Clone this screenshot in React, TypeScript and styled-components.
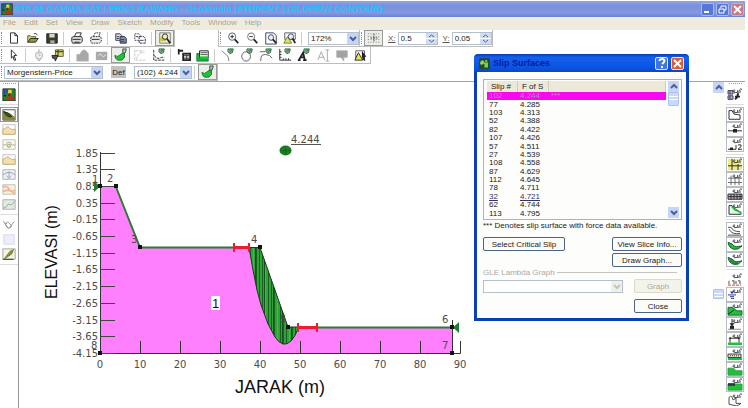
import React from "react";
import styled, { createGlobalStyle, css } from "styled-components";

const Global = createGlobalStyle`
  * { box-sizing: border-box; }
  body { margin: 0; background: #fff; }
  body, button, input, select { font-family: "Liberation Sans", Arial, sans-serif; font-size: 8px; color: #222; }
  button, input, select { margin: 0; padding: 0; border-radius: 0; }
  svg { display: block; }
`;

/* ---------- icons ---------- */

const K = "#222";
const G = "#1fc03a";
const geo = (
  <path d="M8 2.500q-1.500-1-2 .8t1.500.8l.5-1M10 3q1-1 1 .4t-1 .8M12 2.200q1.500 0 .8 1.600M13 1l2 .5M7 5.500l7-1" stroke="#3a4148" fill="none" />
);
const pen = <path d="M8 1l6 0l-1 4l-3 1l-2-2z M9 4l3-3M10 5l3-3" stroke="#245c34" fill="#9fd0a8" />;
const slope = <path d="M1 8q3 2 5 0l6-4v6l-3 3H4q-3-2-3-5z" fill={G} stroke="#0c7a22" />;

const icons: Record<string, React.ReactNode> = {
  new: <path d="M4 2h5l3 3v8H4zM9 2v3h3" stroke={K} fill="#fff" />,
  open: (<><path d="M2 12V5h3l1 1h5v2" stroke="#555" fill="#d8d278" /><path d="M2 12l3-4h9l-3 4z" fill="#9c9a2a" stroke={K} /><path d="M9 3q2-1 4 1" stroke={K} fill="none" /></>),
  save: (<><path d="M2 3h12v10H2z" fill="#3b3b2c" stroke={K} /><path d="M5 3h6v4H5z" fill="#d8d8c8" /><path d="M6 10h5v3H6z" fill="#aaa" /></>),
  print: (<><path d="M5 6l2-4h6l-2 4" fill="#fff" stroke={K} /><path d="M2 7l2-1h9l1 2v3l-2 2H3l-1-2z" fill="#ddd" stroke={K} /><path d="M3 9h9M5 12h6" stroke={K} /></>),
  print2: (<><path d="M5 6l2-4h6l-2 4" fill="#fff" stroke={K} strokeDasharray="2 1" /><path d="M2 7l2-1h9l1 2v3l-2 2H3l-1-2z" fill="#eee" stroke={K} strokeDasharray="2 1" /><path d="M3 9h9" stroke={K} /></>),
  copy: (<><path d="M2 3h5l2 2v5H2z" fill="#dde" stroke="#334" /><path d="M7 6h5l2 2v5H7z" fill="#8a93b8" stroke="#223" /><path d="M8 9h4M8 11h4M3 6h3M3 8h3" stroke="#334" /></>),
  copy2: (<><path d="M2 3h5l2 2v5H2z" fill="#fff" stroke="#445" strokeDasharray="2 1" /><path d="M7 6h5l2 2v5H7z" fill="#fff" stroke="#223" strokeDasharray="3 1" /><path d="M3 6h3M8 10h4" stroke="#334" /></>),
  find: (<><path d="M2 2h12v11H2z" fill="#f2f2d8" stroke="#777" /><path d="M2 8l4-4 3 3v4H3z" fill="#c9c437" /><circle cx="8" cy="6" r="3" fill="#e8eecb" stroke={K} /><path d="M10 8l4 5" stroke={K} strokeWidth="2" /></>),
  zoomin: (<><circle cx="7" cy="6" r="4" fill="#fff" stroke="#456" /><path d="M5 6h4M7 4v4" stroke={K} /><path d="M10 9l4 4" stroke={K} strokeWidth="2" /></>),
  zoomout: (<><circle cx="7" cy="6" r="4" fill="#fff" stroke="#667" /><path d="M5 6h4" stroke={K} /><path d="M10 9l4 4" stroke={K} strokeWidth="2" /></>),
  zoompage: (<><path d="M2 2h9l3 3v9H2z" fill="#fff" stroke="#335" /><circle cx="8" cy="7" r="3" fill="#eef" stroke="#345" /><path d="M10 9l4 4" stroke={K} strokeWidth="2" /></>),
  zoomobj: (<><path d="M2 2h12v7H2z" fill="#fff" stroke="#556" /><path d="M1 13l4-7 5 7z" fill="#e4e35a" stroke="#773" /><circle cx="9" cy="6" r="3" fill="#eef" stroke="#345" /><path d="M11 8l3 5" stroke={K} strokeWidth="2" /></>),
  grid: (<><path d="M1 3h14M1 6h14M1 9h14M1 12h14" stroke="#666" strokeDasharray="1 2" /><path d="M8 3v9M4 7.500h8" stroke="#444" strokeDasharray="2 1" /></>),
  arrow: <path d="M5 2l6 6H8l2 5-2 0-1-4-2 2z" fill="#fff" stroke={K} />,
  compass: (<><path d="M8 1v3M6 12l2 2 2-2" stroke="#aaa" fill="none" /><circle cx="8" cy="8" r="4" fill="#eee" stroke="#aaa" /><path d="M8 5v3h2" stroke="#bbb" fill="none" /></>),
  key: (<><path d="M5 2h9v7H5z" fill="#dcd85c" stroke="#555" /><path d="M5 4h9M8 2v7" stroke={K} /><path d="M1 8h7l-3 6-1-3H2z" fill="#555" stroke={K} /></>),
  gray1: <path d="M1 7h3l3-4 3-1 4 4v8H1z" fill="#a8a8a8" stroke="#b5b5b5" />,
  gray2: (<><path d="M1 4h13v9H1z" fill="#aaa" /><path d="M4 8q2-3 4 0t4-1" stroke="#eee" fill="none" /></>),
  slope: (<>{slope}<path d="M10 1h4l-1 4-3 1z" stroke="#254" fill="#b6c79a" /></>),
  curveoff: <path d="M2 2v11h12M3 3h8M4 12q2-7 9-9M8 5h5" stroke="#c4c4c4" fill="none" strokeDasharray="3 1" />,
  curve: (<><path d="M2 2v11h12M3 8q2 5 8 2l3 0" stroke={K} fill="none" strokeDasharray="3 1" />{pen}</>),
  flag: (<><path d="M2 1v6M1 3h6M7 6h8v7H7z" stroke={K} fill="#ccd" strokeWidth="2" /><path d="M8 8h6M8 11h6M11 6v7" stroke="#444" /></>),
  mesh: (<><path d="M1 6h3v6h10v2H1z" fill={G} stroke="#176b2a" /><path d="M4 3h10v8H4z" fill="#e7f4e4" stroke="#222" /><path d="M5 5h8M5 7h8" stroke="#555" /><path d="M4 9h10v3H4z" fill={G} /></>),
  line: (<><path d="M1 3l7 6 1 5" stroke="#778" fill="none" />{pen}</>),
  circle: (<><circle cx="7" cy="9" r="5" stroke="#556" fill="none" />{pen}</>),
  arc: (<><path d="M2 14q-1-10 10-6l3 3M1 4h6" stroke="#556" fill="none" />{pen}</>),
  axes: (<><path d="M2 1v12h13M2 4h2M2 7h2M2 10h2M6 13v-2M9 13v-2M12 13v-2" stroke={K} fill="none" />{pen}</>),
  text: (<><path d="M2 13L7 5l2 8M4 10h4M1 13h3M7 13h4" stroke={K} fill="none" strokeWidth="2" />{pen}</>),
  textoff: <path d="M2 13l4-9 4 9M3 10h6M11 2h4M13 2v12M11 14h4" stroke="#a7a7a7" fill="none" />,
  callout: <path d="M2 3h12v7h-4v4l-3-4H2z" fill="#a2a2a2" stroke="#b0b0b0" />,
  pick: (<><path d="M2 3h10v9H2z" fill="#fff" stroke="#555" /><path d="M1 13l4-8 5 8z" fill="#e4e35a" stroke={K} /><path d="M9 3l5 6-2 1 1 4-2-1-2-3z" fill={K} /></>),
  app: (<><path d="M1 1h14v14H1z" fill="#1b8a2f" stroke="#222" /><path d="M2 2h6v3H4v4H2z" fill="#2a4bb5" /><path d="M7 2h4v5H7z" fill="#e6df2d" /><path d="M5 10h3V6h3v4h3v4H5z" fill="#c82a20" /><path d="M2 9h3M8 6v3" stroke="#111" /></>),
  dlg: (<><path d="M1 1h14v14H1z" fill="#15552a" stroke="#333" /><path d="M2 5q4-4 6 1h5v7H8V8H2z" fill="#84d05c" /><path d="M2 6h4v3H2zM9 3h3v2H9z" fill="#d2c848" /></>),
  section: (<><path d="M1 2h14v12H1z" fill="#fff" stroke="#444" /><path d="M1 4q8 0 14 7v3H1z" fill="#8c8732" /><path d="M2 4q6 1 9 6-6 1-9-6z" fill="#1c6a2a" stroke="#222" /></>),
  faint1: (<><path d="M1 2h14v11H1z" fill="#fff" stroke="#bbb" /><path d="M1 7q2 0 4-2t4 1 6 1v6H1z" fill="#f3dfae" stroke="#c9a976" /></>),
  faint2: (<><path d="M1 2h14v11H1z" fill="#fafae8" stroke="#bbb" /><path d="M1 8h4l1-3h4l1 3h4" stroke="#aaa" fill="none" /><circle cx="8" cy="9" r="2" fill="#d7dfa5" stroke="#a5a987" /></>),
  faint3: (<><path d="M1 2h14v11H1z" fill="#eef0f4" stroke="#aab" /><path d="M1 8q7-6 14 0M8 4v7M5 9l3 3 3-3" stroke="#8d9ab2" fill="none" /></>),
  faint4: (<><path d="M1 2h14v11H1z" fill="#fbf3cf" stroke="#bbb" /><path d="M1 5q4-3 7 2t7 1M1 10q8-4 14 3" stroke="#ecb4a4" fill="none" strokeWidth="2" /></>),
  faint5: (<><path d="M1 2h14v11H1z" fill="#e3e9e3" stroke="#aaa" /><path d="M1 12q5-1 6-5l4 1 4-5" stroke="#8ea996" fill="none" /></>),
  faint6: <path d="M2 2h12v11H2z" fill="#eeeefa" stroke="#d5d5ea" />,
  check: <path d="M1 4l4 3 1-3M4 9l4 3 6-8M7 5l4 4-2 3M3 6l4 6" stroke="#888" fill="none" />,
  sketch: (<><path d="M1 1h14v12H1z" fill="#f4f4e0" stroke="#999" /><path d="M3 12l6-8 4-2-2 5-6 4z" fill="#8d963c" stroke="#6a703a" /><path d="M1 13h12" stroke={K} /></>),
  r1: (<><path d="M1 3h5v4H1zM1 9h5v4H1zM3 3v4M3 9v4" fill="#bbc" stroke="#335" /><path d="M8 13q3-2 3-7M8 10h5" stroke="#223" fill="none" strokeWidth="2" />{geo}</>),
  r2: (<><path d="M2 3v10h11V8L7 7 5 3z" stroke={K} fill="#fff" />{geo}</>),
  r3: (<><path d="M1 9h14" stroke={K} /><path d="M6 7h4v4H6z" fill={K} />{geo}</>),
  r4: (<><path d="M1 13h8M9 8v5" stroke={K} fill="none" /><path d="M3 11h3v3H3z" fill={K} /><path d="M11 8h3v2l-3 3h4" stroke={K} fill="none" />{geo}</>),
  r5: (<><path d="M1 1h14v13H1z" fill="#efec83" /><path d="M1 9h14M5 1v13M11 7v7" stroke={K} />{geo}</>),
  r6: (<><path d="M1 6h14M1 11h14M4 3v11M8 6v8M12 6v8" stroke="#666" />{geo}</>),
  r7: (<><path d="M1 7h14v6H1z" fill="#bbb" stroke={K} /><path d="M1 10h14M4 7v6M7 7v6M10 7v6M13 7v6" stroke={K} />{geo}</>),
  r8: (<><path d="M2 3v10h12v-2L7 6 5 3z" stroke={K} fill="#e9f7e9" /><path d="M5 4l3 4 6 3" stroke={G} fill="none" strokeWidth="2" />{geo}</>),
  r9: (<><path d="M1 5h3q2 5 9 5M2 7q3 7 11 5M1 14h13" stroke="#444" fill="none" />{geo}</>),
  r10: (<><path d="M1 5q5 2 6 4t8 0q-3 5-8 4T1 5z" fill={G} stroke="#155c25" />{geo}</>),
  r11: (<><path d="M1 5q5 2 6 4t8 0q-3 5-8 4T1 5z" fill="#46b655" stroke="#155c25" /><path d="M4 7v4M6 8v5M8 10v4M10 10v4" stroke="#155c25" />{geo}</>),
  r12: (<><path d="M2 9v4M5 9h2v4M9 9v4M11 9h2v4" stroke="#444" fill="none" /><path d="M1 14h13" stroke="#d33" strokeDasharray="3 1" />{geo}</>),
  r13: (<><path d="M1 8h8M3 10h4M4 12h3" stroke="#1a2a9c" /><path d="M3 4h4l-2 3z" fill="#1a2a9c" />{geo}</>),
  r14: (<><path d="M1 5h4l5 4h5v5H1z" fill={G} stroke="#176b2a" /><path d="M1 13l6-5" stroke={K} />{geo}</>),
  r15: (<><path d="M5 1v7M3 6l2 3 2-3" stroke={K} fill={K} /><path d="M3 9h4v4H3z" fill={K} /><path d="M1 13h13" stroke="#888" />{geo}</>),
  r16: (<><path d="M1 11h14v3H1z" fill={G} /><path d="M3 11V6h9v5M2 7l1-2 1 2M11 7l1-2 1 2" stroke={K} fill="none" />{geo}</>),
  r17: (<><path d="M1 11h14v3H1z" fill={G} /><path d="M1 7h13v4H1z" fill="#ddd" stroke="#333" /><path d="M3 9h10" stroke="#333" strokeDasharray="1 1" />{geo}</>),
  r18: (<><path d="M1 6h5l3 3h6v5H1z" fill={G} stroke="#2c9c40" />{geo}</>),
  r19: (<><path d="M1 7h14v7H1z" fill={G} stroke="#2c9c40" /><path d="M1 6h7v3H1z" fill="#333" />{geo}</>),
  r20: (<><path d="M2 13V5q2-3 3 0l1 3 3-2v6h5l-4 3z" fill="#fff" stroke="#444" />{geo}</>),
};

const Glyph = ({ name, w = 14, h = 14 }: { name: string; w?: number; h?: number }) => (
  <svg width={w} height={h} viewBox="0 0 16 15" preserveAspectRatio="none" aria-hidden="true">{icons[name]}</svg>
);

/* ---------- main window ---------- */

const Page = styled.div`
  min-height: 100vh;
  display: flex;
  flex-direction: column;
  padding: 1px 3px 0 0;
  position: relative;
  overflow: hidden;
`;
const TitleBar = styled.header`
  height: 16px;
  display: flex;
  align-items: center;
  gap: 2px;
  padding: 0 1px;
  background: linear-gradient(#93a5e2, #7a90dd 30%, #8199e2 75%, #6c82cc);
`;
const Title = styled.h1`
  flex: 1;
  margin: 0;
  font-size: 9px;
  line-height: 14px;
  font-weight: bold;
  color: #26c2fa;
  white-space: nowrap;
`;
const CaptionButton = styled.button<{ $close?: boolean; $bright?: boolean }>`
  width: 13px;
  height: 13px;
  display: grid;
  place-items: center;
  border: 1px solid ${(p) => (p.$bright ? "#dfe8fb" : "#a9b9ee")};
  border-radius: 2px;
  background: ${(p) => (p.$close ? (p.$bright ? "#dc5a38" : "#cc7583") : p.$bright ? "#3b75e6" : "#5577d8")};
`;
const MenuBar = styled.nav`
  height: 13px;
  display: flex;
  align-items: center;
  gap: 8px;
  padding: 0 3px 2px;
  background: #efecdf;
`;
const MenuItem = styled.button`
  border: 0;
  background: none;
  color: #a8a594;
  line-height: 10px;
`;
const ToolRow = styled.div`
  display: flex;
  height: 17px;
`;
const Bar = styled.div<{ $gap?: boolean }>`
  display: flex;
  align-items: center;
  height: 17px;
  border: solid #bdbdbd;
  border-width: 0 1px 1px 0;
  margin-right: ${(p) => (p.$gap ? "43px" : "0")};
  border-left-width: ${(p) => (p.$gap === false ? "1px" : "0")};
`;
const Grip = styled.span<{ $flat?: boolean }>`
  flex: none;
  ${(p) =>
    p.$flat
      ? css`width: 13px; height: 2px; margin: 1px 0 2px; border-top: 1px dotted #999;`
      : css`width: 2px; height: 12px; margin: 0 1px; border-left: 1px dotted #888;`}
`;
const Tool = styled.button<{ $on?: boolean }>`
  flex: none;
  width: 19px;
  height: 16px;
  display: grid;
  place-items: center;
  border: 1px solid ${(p) => (p.$on ? "#999" : "transparent")};
  background: ${(p) => (p.$on ? "#eeeee8" : "none")};
`;
const Sep = styled.span<{ $wide?: boolean }>`
  flex: none;
  width: 1px;
  height: 13px;
  margin: 0 ${(p) => (p.$wide ? 6 : 3)}px 0 2px;
  background: #ccc;
`;
const Combo = styled.span<{ $w: number }>`
  flex: none;
  display: grid;
  grid-template-columns: 1fr 11px;
  align-items: center;
  width: ${(p) => p.$w}px;
  height: 13px;
  border: 1px solid #b4bfcc;
  background: #fff;
  select {
    grid-area: 1 / 1 / 2 / 3;
    width: 100%;
    height: 100%;
    appearance: none;
    border: 0;
    padding: 0 2px;
    background: transparent;
    color: #222;
    opacity: 1;
  }
  svg { grid-area: 1 / 2 / 2 / 3; pointer-events: none; }
`;
const Def = styled.button`
  width: 15px;
  height: 12px;
  margin: 0 8px;
  border: 0;
  background: #c2c2c2;
`;
const Field = styled.label`
  display: flex;
  align-items: center;
  gap: 2px;
  margin-left: 5px;
  color: #555;
`;
const Spin = styled.span`
  display: flex;
  width: 40px;
  height: 13px;
  border: 1px solid #b4bfcc;
  input { flex: 1; min-width: 0; border: 0; padding: 0 2px; background: #fff; }
`;
const SpinButton = styled.button`
  border: 0;
  background: #cfdcf8;
`;

const Arrow = ({ off, up }: { off?: boolean; up?: boolean }) => (
  <svg width="11" height="11" viewBox="0 0 11 11" aria-hidden="true">
    <rect width="11" height="11" rx="1" fill={off ? "#f1f0e8" : "#c5d4fa"} />
    <path d={up ? "M3 7l3-3 3 3" : "M3 4l3 3 3-3"} stroke={off ? "#c4c4bc" : "#4d6185"} strokeWidth="2" fill="none" />
  </svg>
);
const Tools = ({ names, on }: { names: string[]; on?: string }) => (
  <>{names.map((n) => <Tool key={n} $on={n === on} aria-label={n}><Glyph name={n} /></Tool>)}</>
);
const Spinner = ({ value, label }: { value: string; label: string }) => (
  <Field>
    <u>{label}</u>
    <Spin>
      <input defaultValue={value} aria-label={label} />
      <SpinButton aria-label={`Step ${label}`}>
        <svg width="11" height="11" viewBox="0 0 11 11"><path d="M3 4l2.500-2L8 4M3 7l2.500 2L8 7" stroke="#4d6185" fill="none" /><path d="M0 5.500h11" stroke="#fff" /></svg>
      </SpinButton>
    </Spin>
  </Field>
);

/* ---------- work area ---------- */

const Work = styled.main`
  flex: 1;
  display: flex;
  align-items: stretch;
  border-top: 1px solid #a3a3a3;
`;
const SideBar = styled.aside<{ $right?: boolean }>`
  flex: none;
  width: ${(p) => (p.$right ? 20 : 19)}px;
  display: flex;
  flex-direction: column;
  align-items: center;
  border-right: ${(p) => (p.$right ? "0" : "1px solid #999")};
`;
const SideTool = styled.button<{ $box?: boolean; $on?: boolean }>`
  flex: none;
  width: 18px;
  height: 15px;
  display: grid;
  place-items: center;
  border: 1px solid ${(p) => (p.$on ? "#999" : p.$box ? "#b5bcc6" : "transparent")};
  background: none;
`;
const SideRule = styled.span`
  flex: none;
  width: 18px;
  height: 1px;
  margin: 2px 0;
  background: #ddd;
`;
const Canvas = styled.section`
  flex: 1;
  min-width: 0;
  svg { width: 100%; height: auto; }
`;
const Scroll = styled.div`
  flex: none;
  width: 14px;
  display: flex;
  flex-direction: column;
  align-items: center;
  background: #fdfdfa;
`;
const ScrollButton = styled.button`
  flex: none;
  width: 11px;
  height: 11px;
  border: 0;
  background: #c5d4fa;
`;
const Track = styled.span<{ $grow: number }>`
  flex: ${(p) => p.$grow};
`;
const Thumb = styled.span<{ $h: number }>`
  flex: none;
  width: 11px;
  height: ${(p) => p.$h}px;
  border: 1px solid #afc2ee;
  border-radius: 1px;
  background: linear-gradient(#c9d8fb 3px, #fff 3px 4px, #c9d8fb 4px 6px, #fff 6px 7px, #c9d8fb 7px);
`;

const AxisText = styled.text`
  font-family: "DejaVu Sans", sans-serif;
  font-size: 10px;
  fill: #4c4c4c;
`;
const AxisTitle = styled.text<{ $size: number }>`
  font-family: "Liberation Sans", sans-serif;
  font-size: ${(p) => p.$size}px;
  fill: #111;
`;

const yTicks = ["1.85", "1.35", "0.85", "0.35", "-0.15", "-0.65", "-1.15", "-1.65", "-2.15", "-2.65", "-3.15", "-3.65", "-4.15"];
const yAt = (i: number) => Math.round(152.5 + (i * 200.5) / 12);
const nodes: [number, number, string, number, number][] = [
  [100, 186, "1", 92, 183],
  [116, 186, "2", 107, 182],
  [140, 247, "3", 131, 243],
  [260, 247, "4", 251, 243],
  [288, 327, "5", 280, 323],
  [452, 327, "6", 442, 323],
  [452, 353, "7", 442, 349],
  [100, 353, "8", 91, 349],
];
const slip = "M249 247.500L253 270L257 290L261 305L268 324L275 337Q283 349 291 341Q295 337 299 327H288L260 247.500Z";

const Chart = () => (
  <svg viewBox="19 82 692 326" role="img" aria-label="Slope section">
    <defs><clipPath id="slip"><path d={slip} /></clipPath></defs>
    <path d="M100 186.500H116L140 247.500H260L288 327H452V353H100Z" fill="#ff80ff" />
    <path d={slip} fill="#2fa338" />
    <g clipPath="url(#slip)">
      {Array.from({ length: 17 }, (_, i) => (
        <path key={i} d={`M${250.5 + i * 3} 247V346`} stroke={i % 4 === 1 ? "#17d81f" : "#1c5f22"} />
      ))}
      {Array.from({ length: 6 }, (_, i) => (
        <path key={i} d={`M${255.5 + i * 9} 247V346`} stroke="#15501a" />
      ))}
    </g>
    <path d={slip} fill="none" stroke="#1b3d1c" />
    <path d="M116 187L140 247.500H249M299 327.500H452" stroke="#2d7a34" strokeWidth="2" fill="none" />
    <path d="M100 186.500H116M100.500 152V353.500H460.500V341M452.500 320V353" stroke="#333" fill="none" />
    {yTicks.map((t, i) => (
      <g key={t}>
        <path d={`M100 ${yAt(i) + 0.5}H115`} stroke="#444" />
        <AxisText x="98" y={yAt(i) + 4} textAnchor="end">{t}</AxisText>
      </g>
    ))}
    {Array.from({ length: 10 }, (_, i) => (
      <g key={i}>
        <path d={`M${100.5 + i * 40} 341V353`} stroke="#333" />
        <AxisText x={100 + i * 40} y="368" textAnchor="middle">{i * 10}</AxisText>
      </g>
    ))}
    <path d="M94 181L100 186.500L94 192ZM459 322L453 327.500L459 333Z" fill="#1d7d2b" />
    {nodes.map(([x, y, n, tx, ty]) => (
      <g key={n}>
        <rect x={x - 2} y={y - 2} width="4" height="4" fill="#111" />
        <AxisText x={tx} y={ty}>{n}</AxisText>
      </g>
    ))}
    <path d="M234 247.500H249M298 327.500H317" stroke="#ee1c2e" strokeWidth="3" />
    <path d="M234 243V252M249 243V252M298 323V332M317 323V332" stroke="#ee1c2e" strokeWidth="2" />
    <ellipse cx="285.500" cy="150.500" rx="6" ry="5" fill="#1c7d24" />
    <path d="M280 150.500H291M285.500 146V155" stroke="#14661a" />
    <AxisText x="291" y="143">4.244</AxisText>
    <path d="M291 144.500H321" stroke="#555" />
    <rect x="211" y="296" width="9" height="14" fill="#fff" />
    <AxisTitle $size={13} x="212" y="308">1</AxisTitle>
    <AxisTitle $size={18} x="235" y="393">JARAK (m)</AxisTitle>
    <AxisTitle $size={16} transform="translate(57 299) rotate(-90)">ELEVASI (m)</AxisTitle>
  </svg>
);

/* ---------- dialog ---------- */

const Dialog = styled.section`
  position: absolute;
  top: 54px;
  right: 59px;
  width: 215px;
  border: solid #0b3fb8;
  border-width: 0 3px 3px;
  border-radius: 5px 5px 0 0;
  background: #fdfdfb;
`;
const DialogTitle = styled.header`
  height: 18px;
  margin: 0 -3px;
  padding: 0 5px;
  display: flex;
  align-items: center;
  gap: 3px;
  border-radius: 4px 4px 0 0;
  background: linear-gradient(#0a3fb0, #1460ee 20%, #0a52e0 80%, #0b45c4);
  h2 { flex: 1; margin: 0; font-size: 9px; line-height: 12px; color: #0a1aa0; }
`;
const Content = styled.div`
  padding: 7px 4px 5px 6px;
`;
const List = styled.div`
  display: flex;
  height: 141px;
  border: 1px solid #a9b3bd;
  padding: 1px 1px 1px 3px;
`;
const Table = styled.table`
  flex: 1;
  height: 137px;
  border-collapse: collapse;
  table-layout: fixed;
  color: #222;
  th { font-weight: normal; text-align: left; background: #ece9d8; padding: 0 0 0 4px; height: 11px; line-height: 9px; box-shadow: inset -1px 0 #cfccbc; }
  td { padding: 0 0 0 2px; line-height: 8px; overflow: hidden; }
  th:nth-child(1) { width: 31px; }
  th:nth-child(2) { width: 31px; }
`;
const Row = styled.tr<{ $selected?: boolean; $link?: boolean }>`
  ${(p) => p.$selected && css`background: #f808f0; color: #b88aa8;`}
  ${(p) => p.$link && css`color: #33336e; text-decoration: underline;`}
`;
const Note = styled.p`
  margin: 1px 0 6px;
  line-height: 10px;
  white-space: nowrap;
`;
const Line = styled.div<{ $top?: number }>`
  display: flex;
  align-items: center;
  justify-content: space-between;
  margin-top: ${(p) => p.$top ?? 0}px;
`;
const Push = styled.button<{ $w: number }>`
  width: ${(p) => p.$w}px;
  height: 14px;
  margin-left: auto;
  border: 1px solid #4b6484;
  border-radius: 2px;
  background: #fbfbf7;
  white-space: nowrap;
  &:first-child:not(:last-child) { margin-left: 0; }
  &:disabled { color: #aaa99c; border-color: #dcdacc; background: #f4f3ea; }
`;
const GroupLabel = styled.label`
  display: flex;
  align-items: center;
  gap: 2px;
  margin: 1px 5px 2px 0;
  line-height: 9px;
  color: #aaa;
  &::after { content: ""; flex: 1; height: 1px; background: #c5c5c0; }
`;

const rows = [
  ["102", "4.244"], ["77", "4.285"], ["103", "4.313"], ["52", "4.388"], ["82", "4.422"],
  ["107", "4.426"], ["57", "4.511"], ["27", "4.539"], ["108", "4.558"], ["87", "4.629"],
  ["112", "4.645"], ["78", "4.711"], ["32", "4.721"], ["62", "4.744"], ["113", "4.795"],
];

const CloseMark = () => <svg width="9" height="9" viewBox="0 0 9 9"><path d="M1 1l7 7M8 1L1 8" stroke="#fff" strokeWidth="2" /></svg>;

const SlipDialog = () => (
  <Dialog role="dialog" aria-label="Slip Surfaces">
    <DialogTitle>
      <Glyph name="dlg" w={11} h={11} />
      <h2>Slip Surfaces</h2>
      <CaptionButton $bright aria-label="Help">
        <svg width="8" height="10" viewBox="0 0 8 10"><path d="M1.500 3q0-2 2.500-2t2.500 2q0 1-2.500 3M4 8v2" stroke="#fff" strokeWidth="2" fill="none" /></svg>
      </CaptionButton>
      <CaptionButton $bright $close aria-label="Close dialog"><CloseMark /></CaptionButton>
    </DialogTitle>
    <Content>
      <List>
        <Table>
          <thead><tr><th>Slip #</th><th>F of S</th><th /></tr></thead>
          <tbody>
            {rows.map(([n, f], i) => (
              <Row key={n} $selected={i === 0} $link={n === "32"}><td>{n}</td><td>{f}</td><td>{i === 0 ? "***" : ""}</td></Row>
            ))}
          </tbody>
        </Table>
        <Scroll>
          <ScrollButton aria-label="Up"><Arrow up /></ScrollButton>
          <Thumb $h={14} />
          <Track $grow={1} />
          <ScrollButton aria-label="Down"><Arrow /></ScrollButton>
        </Scroll>
      </List>
      <Note>*** Denotes slip surface with force data available.</Note>
      <Line><Push $w={82}>Select Critical Slip</Push><Push $w={70}>View Slice Info...</Push></Line>
      <Line $top={2}><Push $w={70}>Draw Graph...</Push></Line>
      <GroupLabel htmlFor="lambda">GLE Lambda Graph</GroupLabel>
      <Line>
        <Combo $w={140}><select id="lambda" disabled><option></option></select><Arrow off /></Combo>
        <Push $w={48} disabled>Graph</Push>
      </Line>
      <Line $top={6}><Push $w={48}>Close</Push></Line>
    </Content>
  </Dialog>
);

const menus = ["File", "Edit", "Set", "View", "Draw", "Sketch", "Modify", "Tools", "Window", "Help"];
const rightGroups = [["r1"], ["r2", "r3", "r4"], ["r5", "r6", "r7", "r8"], ["r9", "r10", "r11"], ["r12", "r13", "r14", "r15", "r16", "r17", "r18", "r19", "r20"]];

export default function App() {
  return (
    <Page>
      <Global />
      <TitleBar>
        <Glyph name="app" w={12} h={12} />
        <Title>STA 06 GAMMA SAT LERNG RAWAHO - GeoStudio [STUDENT ] (SLOPE/W CONTOUR)</Title>
        <CaptionButton aria-label="Minimize"><svg width="9" height="9"><path d="M1 7h5" stroke="#fff" strokeWidth="2" /></svg></CaptionButton>
        <CaptionButton aria-label="Restore"><svg width="9" height="9"><path d="M3 3V1h5v4H6M1 4h5v4H1z" stroke="#fff" fill="none" /></svg></CaptionButton>
        <CaptionButton $close aria-label="Close"><CloseMark /></CaptionButton>
      </TitleBar>
      <MenuBar>{menus.map((m) => <MenuItem key={m}>{m}</MenuItem>)}</MenuBar>

      <ToolRow>
        <Bar $gap>
          <Grip /><Tools names={["new", "open", "save"]} /><Sep /><Tools names={["print", "print2"]} /><Sep />
          <Tools names={["copy", "copy2"]} /><Sep /><Tools names={["find"]} on="find" />
        </Bar>
        <Bar $gap={false}>
          <Grip /><Tools names={["zoomin", "zoomout", "zoompage", "zoomobj"]} /><Sep $wide />
          <Combo $w={51}><select aria-label="Zoom"><option>172%</option></select><Arrow /></Combo>
        </Bar>
        <Bar>
          <Grip />
          <Tools names={["grid"]} on="grid" />
          <Spinner label="X:" value="0.5" />
          <Spinner label="Y:" value="0.05" />
        </Bar>
      </ToolRow>
      <ToolRow>
        <Bar>
          <Grip /><Tools names={["arrow"]} /><Sep /><Tools names={["compass", "key"]} /><Sep />
          <Tools names={["gray1", "gray2", "slope", "curveoff", "curve"]} on="slope" /><Sep />
          <Tools names={["flag", "mesh"]} /><Sep />
          <Tools names={["line", "circle", "arc", "axes", "text", "textoff", "callout", "pick"]} />
        </Bar>
      </ToolRow>
      <ToolRow>
        <Bar>
          <Grip />
          <Combo $w={99}><select aria-label="Method"><option>Morgenstern-Price</option></select><Arrow /></Combo>
          <Def>Def</Def>
          <Combo $w={58}><select aria-label="Slip surface"><option>(102) 4.244</option></select><Arrow /></Combo>
          <Sep /><Tools names={["slope"]} on="slope" />
        </Bar>
      </ToolRow>

      <Work>
        <SideBar>
          <Grip $flat />
          <SideTool aria-label="Materials"><Glyph name="app" h={13} /></SideTool>
          <SideRule />
          <SideTool $on aria-label="Section"><Glyph name="section" h={13} /></SideTool>
          {["faint1", "faint2", "faint1", "faint3", "faint4", "faint5"].map((n, i) => (
            <SideTool key={i} aria-label={n}><Glyph name={n} h={13} /></SideTool>
          ))}
          <SideRule />
          {["check", "faint6", "sketch"].map((n) => (
            <SideTool key={n} aria-label={n}><Glyph name={n} h={13} /></SideTool>
          ))}
          <SideRule />
        </SideBar>
        <Canvas><Chart /></Canvas>
        <Scroll>
          <ScrollButton aria-label="Scroll up"><Arrow up /></ScrollButton>
          <Track $grow={197} />
          <Thumb $h={10} />
          <Track $grow={109} />
        </Scroll>
        <SideBar $right>
          <Grip $flat />
          {rightGroups.map((g, i) => (
            <React.Fragment key={i}>
              {i > 0 && <SideRule />}
              {g.map((n) => (
                <SideTool key={n} $box={!["r1", "r12", "r20"].includes(n)} aria-label={n}><Glyph name={n} w={16} h={13} /></SideTool>
              ))}
            </React.Fragment>
          ))}
        </SideBar>
      </Work>
      <SlipDialog />
    </Page>
  );
}
